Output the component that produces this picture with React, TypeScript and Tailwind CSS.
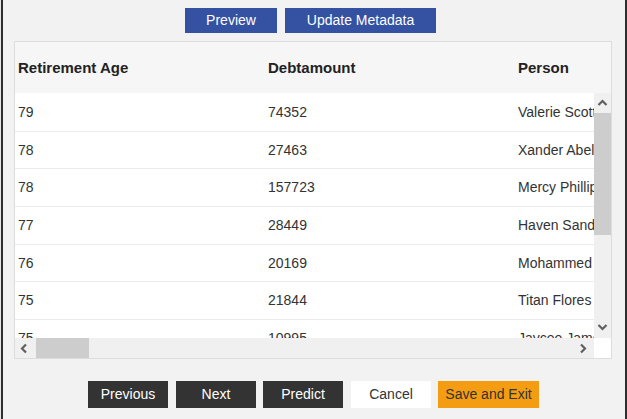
import React from 'react';

const rows = [
  ['79', '74352', 'Valerie Scott'],
  ['78', '27463', 'Xander Abel'],
  ['78', '157723', 'Mercy Phillips'],
  ['77', '28449', 'Haven Sanders'],
  ['76', '20169', 'Mohammed Ali'],
  ['75', '21844', 'Titan Flores'],
  ['75', '10995', 'Jaycee James'],
];

function Caret({ dir }: { dir: 'up' | 'down' | 'left' | 'right' }) {
  const d = {
    up: 'M1.5 7 L5.5 3 L9.5 7',
    down: 'M1.5 3 L5.5 7 L9.5 3',
    left: 'M7 1.5 L3 5.5 L7 9.5',
    right: 'M3 1.5 L7 5.5 L3 9.5',
  }[dir];
  return (
    <svg width="11" height="11" viewBox="0 0 11 11">
      <path d={d} fill="none" stroke="#606060" strokeWidth="2.2" />
    </svg>
  );
}

export default function App() {
  return (
    <div
      className="w-[627px] h-[419px] bg-[#f2f2f2] flex overflow-hidden text-[14px] text-[#333]"
      style={{ fontFamily: '"Liberation Sans", Arial, sans-serif' }}
    >
      <div className="w-[1px] bg-[#e6e6e6]" />
      <div className="w-[2px] bg-[#2e2e2e]" />
      <div className="flex-1 flex flex-col">
        <div className="flex gap-[8px] pl-[182px] pt-[8px]">
          <button className="w-[92px] h-[25px] bg-[#3451a2] text-white">Preview</button>
          <button className="w-[151px] h-[25px] bg-[#3451a2] text-white">Update Metadata</button>
        </div>

        <div className="ml-[11px] mt-[8px] w-[598px] h-[318px] border border-[#dcdcdc] flex flex-col">
          <div className="h-[51px] bg-[#f6f6f6] flex items-center font-bold text-[15px] text-[#222] pt-[2px]">
            <div className="w-[250px] pl-[3px]">Retirement Age</div>
            <div className="w-[250px] pl-[3px]">Debtamount</div>
            <div className="pl-[3px]">Person</div>
          </div>
          <div className="flex h-[245px]">
            <div className="flex-1 bg-white overflow-hidden pt-[1px]">
              {rows.map((r, i) => (
                <div key={i} className="h-[37.7px] flex items-center border-b border-[#ececec] whitespace-nowrap">
                  <div className="w-[250px] shrink-0 pl-[3px]">{r[0]}</div>
                  <div className="w-[250px] shrink-0 pl-[3px]">{r[1]}</div>
                  <div className="shrink-0 pl-[3px]">{r[2]}</div>
                </div>
              ))}
            </div>
            <div className="w-[17px] bg-[#f0f0f0] flex flex-col items-center">
              <div className="h-[20px] flex items-center justify-center">
                <Caret dir="up" />
              </div>
              <div className="w-[17px] h-[122px] bg-[#cdcdcd]" />
              <div className="flex-1" />
              <div className="h-[22px] flex items-center justify-center">
                <Caret dir="down" />
              </div>
            </div>
          </div>
          <div className="flex flex-1">
            <div className="flex-1 bg-[#f0f0f0] flex items-center">
              <div className="w-[17px] flex justify-center pl-[2px]">
                <Caret dir="left" />
              </div>
              <div className="w-[53px] h-full bg-[#cdcdcd] ml-[4px]" />
              <div className="flex-1" />
              <div className="w-[22px] flex justify-center">
                <Caret dir="right" />
              </div>
            </div>
            <div className="w-[17px] bg-white" />
          </div>
        </div>

        <div className="flex pl-[85px] mt-[22px]">
          <button className="w-[80px] h-[27px] bg-[#333] text-white">Previous</button>
          <button className="w-[80px] h-[27px] bg-[#333] text-white ml-[8px]">Next</button>
          <button className="w-[80px] h-[27px] bg-[#333] text-white ml-[7px]">Predict</button>
          <button className="w-[80px] h-[27px] bg-white text-[#333] ml-[8px]">Cancel</button>
          <button className="w-[101px] h-[27px] bg-[#f59d12] text-[#333] ml-[7px]">Save and Exit</button>
        </div>
      </div>
      <div className="w-[2px] bg-[#2e2e2e]" />
    </div>
  );
}
